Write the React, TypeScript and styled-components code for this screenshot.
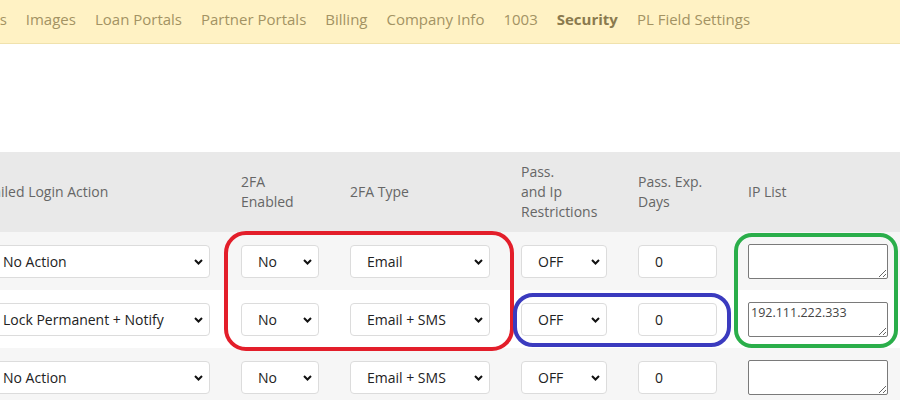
import styled, { createGlobalStyle } from 'styled-components';

const GlobalStyle = createGlobalStyle`
  html, body {
    margin: 0;
    padding: 0;
    background: #fff;
    overflow: hidden;
  }
  body {
    font-family: 'Open Sans', 'Liberation Sans', sans-serif;
  }
`;

const Page = styled.div`
  position: relative;
  width: 900px;
  height: 400px;
  overflow: hidden;
`;

const Nav = styled.nav`
  height: 44px;
  background: #fff2c4;
  border-bottom: 1px solid #f0e2ad;
  display: flex;
  align-items: center;
  gap: 19px;
  padding-bottom: 6px;
  box-sizing: border-box;
  margin-left: -33px;
`;

const NavItem = styled.span<{ $active?: boolean }>`
  font-size: 15px;
  white-space: nowrap;
  color: ${(p) => (p.$active ? '#8a7a4e' : '#a39363')};
  font-weight: ${(p) => (p.$active ? 700 : 400)};
`;

const Spacer = styled.div`
  height: 108px;
`;

const Table = styled.div`
  margin-left: -14px;
  width: 960px;
`;

const Row = styled.div<{ $bg: string; $h: number }>`
  display: grid;
  grid-template-columns: 224px 78px 140px 86px 79px 140px;
  column-gap: 31px;
  align-items: center;
  height: ${(p) => p.$h}px;
  background: ${(p) => p.$bg};
  padding-right: 60px;
  margin-left: -20px;
  padding-left: 20px;
`;

const HeadCell = styled.div`
  font-size: 14px;
  line-height: 20px;
  color: #666;
`;

const SelectWrap = styled.div`
  position: relative;
  height: 33px;
`;

const Select = styled.select`
  appearance: none;
  width: 100%;
  height: 33px;
  box-sizing: border-box;
  border: 1px solid #dcdcdc;
  border-radius: 4px;
  background: #fff;
  padding: 0 24px 0 16px;
  font-family: 'Open Sans', 'Liberation Sans', sans-serif;
  font-size: 14px;
  color: #222;
`;

const Chevron = styled.svg`
  position: absolute;
  right: 7px;
  top: 14px;
  width: 9px;
  height: 6px;
  pointer-events: none;
`;

const NumInput = styled.input`
  width: 100%;
  height: 33px;
  box-sizing: border-box;
  border: 1px solid #dcdcdc;
  border-radius: 4px;
  padding: 0 0 0 16px;
  font-family: 'Open Sans', 'Liberation Sans', sans-serif;
  font-size: 14px;
  color: #222;
`;

const IpArea = styled.textarea`
  width: 140px;
  height: 35px;
  box-sizing: border-box;
  border: 1px solid #7a7a7a;
  border-radius: 2px;
  padding: 1px 2px;
  font-family: 'Open Sans', 'Liberation Sans', sans-serif;
  font-size: 12.5px;
  line-height: 17px;
  color: #444;
  background: #fff;
`;

const Mark = styled.div<{ $color: string; $r: number }>`
  position: absolute;
  border: 4px solid ${(p) => p.$color};
  border-radius: ${(p) => p.$r}px;
  box-sizing: border-box;
  pointer-events: none;
`;

type Opt = { value: string };

function Dropdown({ value }: Opt) {
  return (
    <SelectWrap>
      <Select defaultValue={value}>
        <option>{value}</option>
      </Select>
      <Chevron viewBox="0 0 9 6">
        <path d="M1 1l3.5 3.5L8 1" fill="none" stroke="#111" strokeWidth="2" />
      </Chevron>
    </SelectWrap>
  );
}

const navItems = [
  'Users',
  'Images',
  'Loan Portals',
  'Partner Portals',
  'Billing',
  'Company Info',
  '1003',
  'Security',
  'PL Field Settings',
];

const rows = [
  { action: 'No Action', twofa: 'No', type: 'Email', restr: 'OFF', days: '0', ips: '' },
  {
    action: 'Lock Permanent + Notify',
    twofa: 'No',
    type: 'Email + SMS',
    restr: 'OFF',
    days: '0',
    ips: '192.111.222.333',
  },
  { action: 'No Action', twofa: 'No', type: 'Email + SMS', restr: 'OFF', days: '0', ips: '' },
];

export default function App() {
  return (
    <Page>
      <GlobalStyle />
      <Nav>
        {navItems.map((n) => (
          <NavItem key={n} $active={n === 'Security'}>
            {n}
          </NavItem>
        ))}
      </Nav>
      <Spacer />
      <Table>
        <Row $bg="#e9e9e9" $h={80}>
          <HeadCell>Failed Login Action</HeadCell>
          <HeadCell>2FA Enabled</HeadCell>
          <HeadCell>2FA Type</HeadCell>
          <HeadCell>
            Pass.
            <br />
            and Ip
            <br />
            Restrictions
          </HeadCell>
          <HeadCell>Pass. Exp. Days</HeadCell>
          <HeadCell>IP List</HeadCell>
        </Row>
        {rows.map((r, i) => (
          <Row key={i} $bg={i % 2 === 0 ? '#f6f6f6' : '#ffffff'} $h={58}>
            <Dropdown value={r.action} />
            <Dropdown value={r.twofa} />
            <Dropdown value={r.type} />
            <Dropdown value={r.restr} />
            <NumInput defaultValue={r.days} />
            <IpArea defaultValue={r.ips} />
          </Row>
        ))}
      </Table>
      <Mark $color="#e31e2a" $r={22} style={{ left: 224, top: 231, width: 290, height: 120 }} />
      <Mark $color="#3b3bbf" $r={20} style={{ left: 513, top: 293, width: 218, height: 54 }} />
      <Mark $color="#2aae4a" $r={18} style={{ left: 734, top: 233, width: 164, height: 115 }} />
    </Page>
  );
}
